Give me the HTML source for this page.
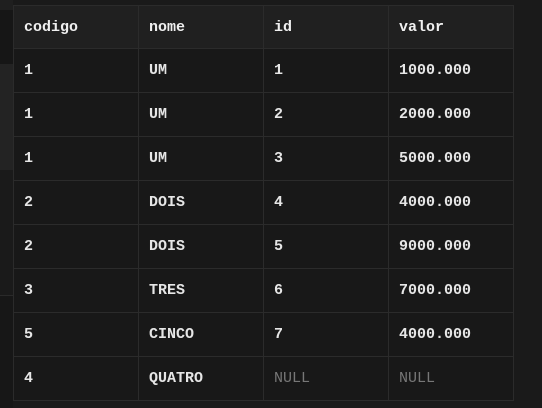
<!DOCTYPE html><html><head><style>
body{margin:0;width:542px;height:407px;background:#1a1a1a;overflow:hidden;position:relative;font-family:"Liberation Mono",monospace;}
.strip{position:absolute;left:0;width:13px}
table{position:absolute;left:13px;top:5px;border-collapse:collapse;background:#181818;table-layout:fixed}
td,th{width:125px;border:1px solid #2b2b2b;padding:0 0 0 10px;text-align:left;font-size:15px;color:#e6e6e6;font-weight:bold;height:44px;box-sizing:border-box}
th{background:#202020;color:#f0f0f0;height:43px}
td.n{color:#777;font-weight:normal}
</style></head><body>
<div class="strip" style="top:0;height:10px;background:#1f1f1f"></div>
<div class="strip" style="top:10px;height:54px;background:#161616"></div>
<div class="strip" style="top:64px;height:106px;background:#232323"></div>
<div class="strip" style="top:170px;height:125px;background:#1a1a1a"></div>
<div class="strip" style="top:295px;height:112px;background:#171717;border-top:1px solid #2a2a2a"></div>
<table>
<tr><th>codigo</th><th>nome</th><th>id</th><th>valor</th></tr>
<tr><td>1</td><td>UM</td><td>1</td><td>1000.000</td></tr>
<tr><td>1</td><td>UM</td><td>2</td><td>2000.000</td></tr>
<tr><td>1</td><td>UM</td><td>3</td><td>5000.000</td></tr>
<tr><td>2</td><td>DOIS</td><td>4</td><td>4000.000</td></tr>
<tr><td>2</td><td>DOIS</td><td>5</td><td>9000.000</td></tr>
<tr><td>3</td><td>TRES</td><td>6</td><td>7000.000</td></tr>
<tr><td>5</td><td>CINCO</td><td>7</td><td>4000.000</td></tr>
<tr><td>4</td><td>QUATRO</td><td class="n">NULL</td><td class="n">NULL</td></tr>
</table>
</body></html>
